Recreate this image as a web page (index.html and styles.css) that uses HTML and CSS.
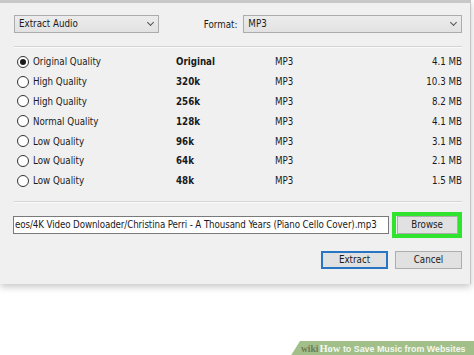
FILE: index.html
```html
<!DOCTYPE html>
<html>
<head>
	<meta charset="utf-8" />
	<title>Extract Audio</title>
	<link rel="stylesheet" href="styles.css">
</head>
<body>
<div class="dialog">
	<div class="topRow">
		<div class="select selMode">Extract Audio<span class="chev"></span></div>
		<span class="fmtLabel">Format:</span>
		<div class="select selFormat">MP3<span class="chev"></span></div>
	</div>
	<div class="sep"></div>
	<div class="qualities">
		<div class="row"><span class="radio on"></span><span class="qName">Original Quality</span><b class="rate">Original</b><span class="fmt">MP3</span><span class="size">4.1 MB</span></div>
		<div class="row"><span class="radio"></span><span class="qName">High Quality</span><b class="rate">320k</b><span class="fmt">MP3</span><span class="size">10.3 MB</span></div>
		<div class="row"><span class="radio"></span><span class="qName">High Quality</span><b class="rate">256k</b><span class="fmt">MP3</span><span class="size">8.2 MB</span></div>
		<div class="row"><span class="radio"></span><span class="qName">Normal Quality</span><b class="rate">128k</b><span class="fmt">MP3</span><span class="size">4.1 MB</span></div>
		<div class="row"><span class="radio"></span><span class="qName">Low Quality</span><b class="rate">96k</b><span class="fmt">MP3</span><span class="size">3.1 MB</span></div>
		<div class="row"><span class="radio"></span><span class="qName">Low Quality</span><b class="rate">64k</b><span class="fmt">MP3</span><span class="size">2.1 MB</span></div>
		<div class="row"><span class="radio"></span><span class="qName">Low Quality</span><b class="rate">48k</b><span class="fmt">MP3</span><span class="size">1.5 MB</span></div>
	</div>
	<div class="sep sep2"></div>
	<div class="pathRow">
		<div class="pathField">eos/4K Video Downloader/Christina Perri - A Thousand Years (Piano Cello Cover).mp3</div>
		<div class="highlight"><div class="btn">Browse</div></div>
	</div>
	<div class="btnRow">
		<div class="btn btnDefault">Extract</div>
		<div class="btn">Cancel</div>
	</div>
</div>
<div class="wikiBar"><span class="wk">wiki</span><span class="how">How</span> to Save Music from Websites</div>
</body>
</html>
```
FILE: styles.css
```css
html, body{
	margin: 0;
	padding: 0;
}
body{
	width: 474px;
	height: 355px;
	overflow: hidden;
	position: relative;
	background-color: #fff;
	font-family: "DejaVu Sans Condensed", "DejaVu Sans", sans-serif;
	font-size: 9.7px;
	color: #1a1a1a;
}
/* fenetre */
.dialog{
	box-sizing: border-box;
	width: 471px;
	height: 284px;
	background-color: #f0f0f0;
	border-top: 3px solid #c8c8c8;
	border-right: 1px solid #c4c4c4;
	box-shadow: 0 3px 7px rgba(0, 0, 0, 0.22);
	padding: 12px 8px 0 14px;
}
.topRow{
	display: flex;
	align-items: center;
	height: 18px;
}
.select{
	box-sizing: border-box;
	position: relative;
	height: 18px;
	line-height: 16px;
	padding-left: 4px;
	border: 1px solid #acacac;
	background: linear-gradient(#ececec, #e2e2e2);
}
.selMode{
	width: 145px;
}
.selFormat{
	width: 219px;
}
.chev{
	position: absolute;
	right: 5px;
	top: 4px;
	width: 4px;
	height: 4px;
	border-right: 1px solid #555;
	border-bottom: 1px solid #555;
	transform: rotate(45deg);
}
.fmtLabel{
	margin: 0 6px 0 45px;
}
.sep{
	width: 448px;
	height: 1px;
	margin-top: 13px;
	background-color: #d4d4d4;
	border-bottom: 1px solid #fafafa;
}
/* liste des qualites */
.qualities{
	margin-top: 4px;
	width: 448px;
}
.row{
	display: grid;
	grid-template-columns: 19px 143px 99px 1fr auto;
	align-items: center;
	height: 19.8px;
}
.radio{
	box-sizing: border-box;
	width: 12px;
	height: 12px;
	margin-left: 3px;
	border: 1px solid #333;
	border-radius: 50%;
	background-color: #fff;
	position: relative;
}
.radio.on::after{
	content: "";
	position: absolute;
	left: 2px;
	top: 2px;
	width: 6px;
	height: 6px;
	border-radius: 50%;
	background-color: #1a1a1a;
}
.rate{
	font-weight: bold;
}
.size{
	text-align: right;
}
.sep2{
	margin-top: 10px;
}
/* chemin */
.pathRow{
	display: flex;
	align-items: center;
	margin-top: 9px;
	margin-left: -1px;
	height: 26px;
}
.pathField{
	box-sizing: border-box;
	width: 377px;
	height: 18px;
	line-height: 16px;
	border: 1px solid #7a7a7a;
	background-color: #fff;
	overflow: hidden;
	white-space: nowrap;
	padding-left: 1px;
	letter-spacing: -0.1px;
}
.highlight{
	box-sizing: border-box;
	width: 70px;
	height: 26px;
	margin-left: 3px;
	border: 4px solid #2fe32f;
	display: flex;
	align-items: center;
	justify-content: center;
}
.btn{
	box-sizing: border-box;
	width: 61px;
	height: 18px;
	line-height: 16px;
	text-align: center;
	border: 1px solid #adadad;
	background-color: #e1e1e1;
}
.btnRow{
	display: flex;
	justify-content: flex-end;
	gap: 7px;
	width: 448px;
	margin-top: 13px;
}
.btnRow .btn{
	width: 67px;
}
.btnDefault{
	border: 2px solid #2a74c4;
	line-height: 14px;
}
/* bandeau */
.wikiBar{
	position: absolute;
	left: 290px;
	top: 341px;
	width: 184px;
	height: 16px;
	padding-left: 11px;
	box-sizing: border-box;
	background-color: #a2bf8a;
	clip-path: polygon(10px 0, 100% 0, 100% 100%, 0 100%);
	font-family: "Liberation Sans", Arial, sans-serif;
	font-weight: bold;
	font-size: 8.9px;
	line-height: 16px;
	color: #f4f8ef;
	white-space: nowrap;
}
.wk{
	font-family: "Liberation Serif", serif;
	color: #6a7d58;
	font-size: 9.5px;
	margin-right: 1px;
}
.how{
	font-family: "Liberation Serif", serif;
	font-size: 10.5px;
}
```
